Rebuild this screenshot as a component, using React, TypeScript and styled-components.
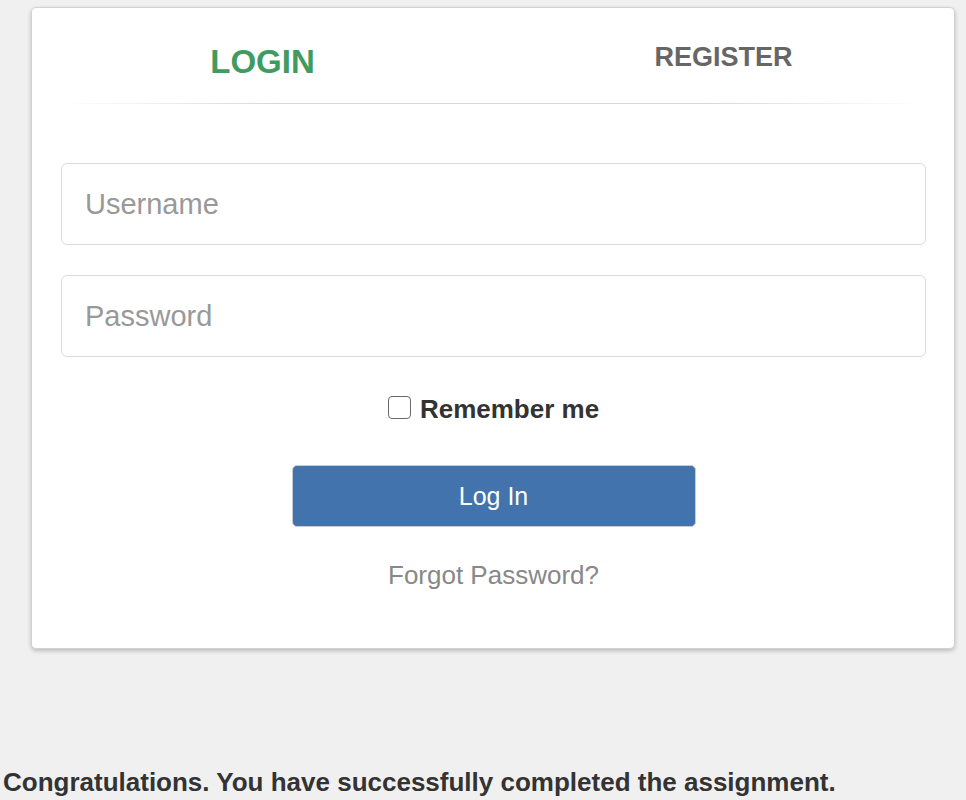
import styled, { createGlobalStyle } from 'styled-components';

const GlobalStyle = createGlobalStyle`
  html, body {
    margin: 0;
    padding: 0;
    background-color: #f0f0f0;
    font-family: "Liberation Sans", Arial, Helvetica, sans-serif;
  }
`;

const App = () => {
  return (
    <>
      <GlobalStyle />
      <Page>
        <Card>
          <Tabs>
            <Tab $active>LOGIN</Tab>
            <Tab>REGISTER</Tab>
          </Tabs>
          <Divider />
          <Form onSubmit={(e) => e.preventDefault()}>
            <Input type="text" placeholder="Username" />
            <Input type="password" placeholder="Password" />
            <RememberRow>
              <Checkbox type="checkbox" id="remember" />
              <RememberLabel htmlFor="remember">Remember me</RememberLabel>
            </RememberRow>
            <SubmitButton type="submit">Log In</SubmitButton>
            <ForgotLink href="#">Forgot Password?</ForgotLink>
          </Form>
        </Card>
        <Message>Congratulations. You have successfully completed the assignment.</Message>
      </Page>
    </>
  );
};

export default App;

const Page = styled.div`
  display: flex;
  flex-direction: column;
  padding-top: 7px;
`;

const Card = styled.div`
  width: 922px;
  margin-left: 31px;
  background-color: #fff;
  border: 1px solid #d2d2d2;
  border-radius: 5px;
  box-shadow: 0 2px 4px rgba(0, 0, 0, 0.22);
`;

const Tabs = styled.div`
  display: flex;
  height: 95px;
`;

const Tab = styled.div<{ $active?: boolean }>`
  flex: 1;
  display: flex;
  align-items: center;
  justify-content: center;
  padding-top: ${(p) => (p.$active ? '12px' : '3px')};
  font-size: ${(p) => (p.$active ? '33px' : '27px')};
  font-weight: bold;
  color: ${(p) => (p.$active ? '#3f9b5e' : '#666')};
  cursor: pointer;
`;

const Divider = styled.div`
  height: 1px;
  margin: 0 34px 0 31px;
  background: linear-gradient(to right, rgba(221, 221, 221, 0), #d8d8d8 25%, #d8d8d8 75%, rgba(221, 221, 221, 0));
`;

const Form = styled.form`
  display: flex;
  flex-direction: column;
  align-items: center;
  padding: 59px 28px 58px 29px;
`;

const Input = styled.input`
  box-sizing: border-box;
  width: 100%;
  height: 82px;
  margin-bottom: 30px;
  padding: 0 23px;
  border: 1px solid #dadada;
  border-radius: 6px;
  font-family: inherit;
  font-size: 29px;
  color: #333;
  outline: none;

  &::placeholder {
    color: #999;
  }
`;

const RememberRow = styled.div`
  display: flex;
  align-items: center;
  gap: 9px;
  margin-top: 7px;
  height: 30px;
`;

const Checkbox = styled.input`
  appearance: none;
  box-sizing: border-box;
  width: 23px;
  height: 23px;
  margin: 0 0 3px 0;
  border: 1.5px solid #6a6a6a;
  border-radius: 4px;
  background: #fff;
`;

const RememberLabel = styled.label`
  font-size: 26px;
  font-weight: bold;
  color: #333;
`;

const SubmitButton = styled.button`
  box-sizing: border-box;
  width: 404px;
  height: 62px;
  margin-top: 41px;
  background-color: #4373ac;
  border: 1px solid #c7ccd2;
  border-radius: 5px;
  color: #fff;
  font-family: inherit;
  font-size: 25px;
  cursor: pointer;
`;

const ForgotLink = styled.a`
  margin-top: 33px;
  font-size: 26px;
  line-height: 30px;
  color: #888;
  text-decoration: none;
`;

const Message = styled.div`
  margin-top: 118px;
  padding-left: 3px;
  font-size: 26px;
  font-weight: bold;
  color: #333;
`;
